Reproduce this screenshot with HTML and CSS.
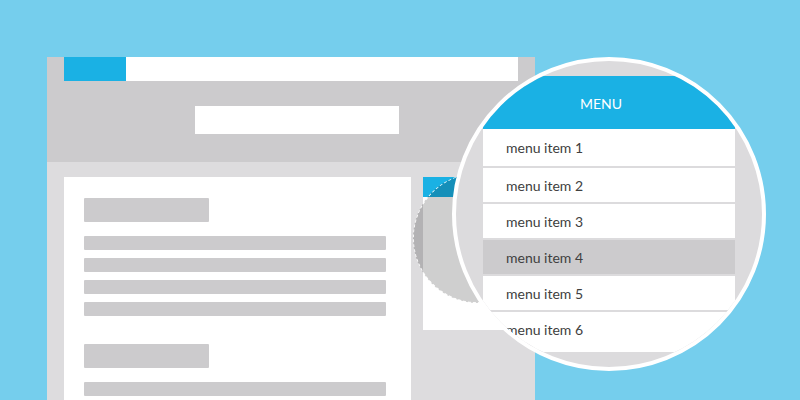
FILE: index.html
```html
<!DOCTYPE html>
<html>
<head>
<meta charset="utf-8">
<link rel="stylesheet" href="styles.css">
</head>
<body>
<div class="scene">
  <div class="frame">
    <div class="frame-head">
      <div class="topbar"><div class="topbar-tab"></div><div class="topbar-rest"></div></div>
      <div class="title-box"></div>
    </div>
    <div class="frame-body">
      <div class="card">
        <div class="bar heading"></div>
        <div class="bar line first"></div>
        <div class="bar line"></div>
        <div class="bar line"></div>
        <div class="bar line"></div>
        <div class="bar heading second"></div>
        <div class="bar line first"></div>
      </div>
      <div class="sidebar">
        <div class="sidebar-head"></div>
      </div>
    </div>
  </div>
  <div class="lens-source"></div>
  <div class="lens">
    <div class="menu">
      <div class="menu-head">MENU</div>
      <div class="menu-item tall">menu item 1</div>
      <div class="menu-item">menu item 2</div>
      <div class="menu-item">menu item 3</div>
      <div class="menu-item active">menu item 4</div>
      <div class="menu-item">menu item 5</div>
      <div class="menu-item last">menu item 6</div>
    </div>
  </div>
</div>
</body>
</html>
```
FILE: styles.css
```css
html, body {
  margin: 0;
  padding: 0;
  width: 800px;
  height: 400px;
  overflow: hidden;
  background: #75ceed;
  font-family: Lato, "Open Sans", sans-serif;
}
.scene {
  position: relative;
  width: 800px;
  height: 400px;
  padding: 57px 0 0 47px;
  box-sizing: border-box;
}
.frame {
  width: 488px;
  height: 360px;
  background: #dddcde;
  display: flex;
  flex-direction: column;
}
.frame-head {
  height: 105px;
  background: #cccbcd;
  padding: 0 17px;
  display: flex;
  flex-direction: column;
}
.topbar {
  height: 24px;
  display: flex;
}
.topbar-tab {
  width: 62px;
  background: #1ab1e4;
}
.topbar-rest {
  flex: 1;
  background: #ffffff;
}
.title-box {
  width: 204px;
  height: 28px;
  background: #ffffff;
  margin: 25px 0 0 131px;
}
.frame-body {
  flex: 1;
  display: flex;
  align-items: flex-start;
  gap: 12px;
  padding: 15px 17px 0 17px;
}
.card {
  width: 347px;
  height: 240px;
  background: #ffffff;
  padding: 21px 0 0 20px;
  box-sizing: border-box;
  display: flex;
  flex-direction: column;
}
.bar {
  background: #cccbcd;
  border-radius: 1px;
}
.heading {
  width: 125px;
  height: 24px;
}
.heading.second {
  margin-top: 28px;
}
.line {
  width: 302px;
  height: 14px;
  margin-top: 8px;
}
.line.first {
  margin-top: 14px;
}
.sidebar {
  flex: 1;
  height: 153px;
  background: #ffffff;
}
.sidebar-head {
  height: 20px;
  background: #1ab1e4;
}
.lens-source {
  position: absolute;
  left: 413px;
  top: 173px;
  width: 130px;
  height: 130px;
  box-sizing: border-box;
  border-radius: 50%;
  border: 1px dashed rgba(255, 255, 255, 0.9);
  background: rgba(0, 0, 0, 0.19);
}
.lens {
  position: absolute;
  left: 452px;
  top: 57px;
  width: 314px;
  height: 314px;
  box-sizing: border-box;
  border: 4px solid #ffffff;
  border-radius: 50%;
  background: #dcdbdd;
  overflow: hidden;
}
.menu {
  margin: 15px 0 0 27px;
  width: 252px;
  display: flex;
  flex-direction: column;
}
.menu-head {
  height: 53px;
  background: #1ab1e4;
  color: #ffffff;
  font-size: 14px;
  display: flex;
  align-items: center;
  justify-content: center;
  padding-right: 16px;
  padding-top: 2px;
  box-sizing: border-box;
}
.menu-item {
  height: 34px;
  background: #ffffff;
  border-bottom: 2px solid #dcdbdd;
  color: #404040;
  font-size: 14px;
  padding-left: 23px;
  display: flex;
  align-items: center;
}
.menu-item.tall {
  height: 37px;
}
.menu-item.active {
  background: #cccbcd;
}
.menu-item.last {
  height: 34px;
  border-bottom: none;
  padding-bottom: 6px;
}
```
